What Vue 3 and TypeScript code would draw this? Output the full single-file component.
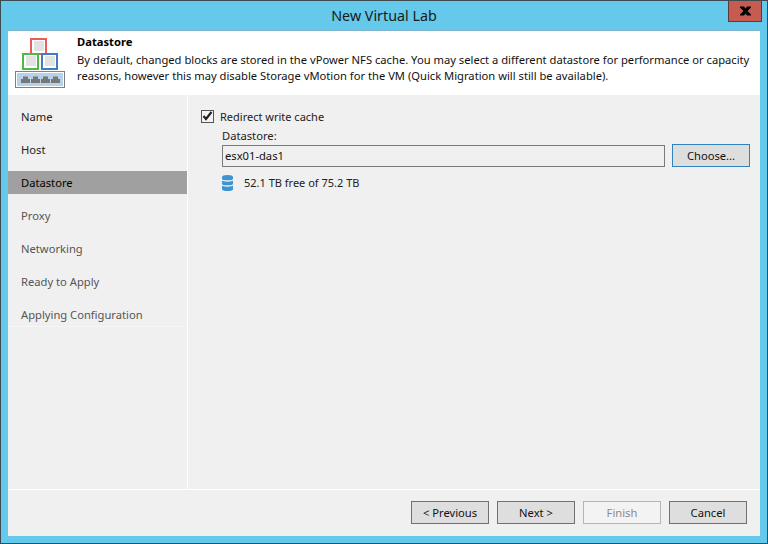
<script setup lang="ts">
const steps = [
  { label: 'Name', state: 'done' },
  { label: 'Host', state: 'done' },
  { label: 'Datastore', state: 'active' },
  { label: 'Proxy', state: 'todo' },
  { label: 'Networking', state: 'todo' },
  { label: 'Ready to Apply', state: 'todo' },
  { label: 'Applying Configuration', state: 'todo' },
]
</script>

<template>
  <div class="window">
    <div class="titlebar">
      <div class="title">New Virtual Lab</div>
      <div class="close">
        <svg width="13" height="10" viewBox="0 0 13 10"><path d="M1 0.500H5L6.500 2.500L8 0.500H12V1.500L8.500 5L12 8.500V9.500H8L6.500 7.500L5 9.500H1V8.500L4.500 5L1 1.500Z" fill="#000" /></svg>
      </div>
    </div>
    <div class="client">
      <header class="header">
        <svg class="logo" width="69" height="64" viewBox="0 0 69 64">
          <rect x="23" y="8" width="15" height="15" fill="#fff" stroke="#e85c5c" stroke-width="2" />
          <rect x="26" y="10" width="10" height="10" fill="#e2e2e2" />
          <rect x="15" y="23" width="15" height="15" fill="#fff" stroke="#4fb848" stroke-width="2" />
          <rect x="18" y="25" width="10" height="10" fill="#e2e2e2" />
          <rect x="34" y="23" width="15" height="15" fill="#fff" stroke="#3f7cc4" stroke-width="2" />
          <rect x="37" y="25" width="10" height="10" fill="#e2e2e2" />
          <rect x="7.500" y="40.500" width="49" height="16" fill="#fff" stroke="#808080" />
          <rect x="9" y="42" width="46" height="13" fill="#b8d0e8" />
          <path d="M13 52V48H15V45.500H20V48H22V52Z M23 52V48H25V45.500H30V48H32V52Z M33 52V48H35V45.500H40V48H42V52Z M43 52V48H45V45.500H50V48H52V52Z" fill="#777" />
        </svg>
        <div class="head-text">
          <div class="head-title">Datastore</div>
          <div class="head-desc">By default, changed blocks are stored in the vPower NFS cache. You may select a different datastore for performance or capacity reasons, however this may disable Storage vMotion for the VM (Quick Migration will still be available).</div>
        </div>
      </header>
      <div class="body">
        <nav class="nav">
          <div v-for="s in steps" :key="s.label" class="step" :class="s.state">{{ s.label }}</div>
        </nav>
        <main class="content">
          <label class="check-row">
            <span class="check">
              <svg width="11" height="10" viewBox="0 0 11 10"><path d="M1.500 5L4 8L9.500 1" fill="none" stroke="#222" stroke-width="2.200" /></svg>
            </span>
            <span>Redirect write cache</span>
          </label>
          <div class="ds-block">
            <div class="ds-label">Datastore:</div>
            <div class="ds-row">
              <div class="input">esx01-das1</div>
              <button class="btn choose">Choose...</button>
            </div>
            <div class="free">
              <svg width="11" height="16" viewBox="0 0 11 16">
                <path d="M0 2Q0 0 5.500 0T11 2V4Q11 5.300 5.500 5.300T0 4Z M0 5.800Q3 6.800 5.500 6.800T11 5.800V9Q11 10.300 5.500 10.300T0 9Z M0 10.800Q3 11.800 5.500 11.800T11 10.800V14Q11 16 5.500 16T0 14Z" fill="#3f93d2" />
              </svg>
              <span>52.1 TB free of 75.2 TB</span>
            </div>
          </div>
        </main>
      </div>
      <footer class="footer">
        <button class="btn">&lt; Previous</button>
        <button class="btn">Next &gt;</button>
        <button class="btn disabled">Finish</button>
        <button class="btn">Cancel</button>
      </footer>
    </div>
  </div>
</template>

<style>
html, body { margin: 0; padding: 0; }
</style>

<style scoped>
.window {
  width: 768px;
  height: 544px;
  box-sizing: border-box;
  background: #64c9eb;
  border: 1px solid #3c4a52;
  padding: 0 7px 7px 7px;
  display: flex;
  flex-direction: column;
  font-family: "Noto Sans", sans-serif;
  font-size: 11.200px;
  color: #111;
  overflow: hidden;
}
.titlebar {
  height: 30px;
  flex: none;
  position: relative;
  display: flex;
  align-items: center;
  justify-content: center;
}
.title { font-size: 14.300px; color: #1a1a1a; margin-top: -1px; }
.close {
  position: absolute;
  top: 0;
  right: -2px;
  width: 34px;
  height: 21px;
  box-sizing: border-box;
  background: #c75b52;
  border: 1px solid #5c3a38;
  border-top: none;
  display: flex;
  align-items: center;
  justify-content: center;
}
.client {
  flex: 1;
  display: flex;
  flex-direction: column;
  background: #f0f0f0;
  min-height: 0;
  box-shadow: 0 -1px 0 #7fb4cc;
}
.header {
  height: 64px;
  flex: none;
  background: #fff;
  display: flex;
}
.logo { flex: none; }
.head-text { padding-top: 3px; }
.head-title { font-weight: 700; line-height: 15px; color: #000; }
.head-desc { line-height: 16px; margin-top: 3px; color: #111; width: 680px; }
.body { flex: 1; display: flex; min-height: 0; border-bottom: 1px solid #fff; }
.nav {
  width: 180px;
  box-sizing: border-box;
  flex: none;
  padding-top: 10px;
  border-right: 1px solid #fff;
}
.step {
  height: 23px;
  line-height: 23px;
  padding-left: 13px;
  margin-bottom: 10px;
}
.step:last-child { box-shadow: 0 1px 0 #f5f5f5; }
.step.done { color: #222; }
.step.active { background: #a0a0a0; color: #000; }
.step.todo { color: #555; }
.content { flex: 1; padding: 13px 10px 0 13px; min-width: 0; }
.check-row { display: flex; align-items: center; gap: 6px; height: 16px; color: #222; font-size: 11px; }
.check {
  width: 13px;
  height: 13px;
  box-sizing: border-box;
  border: 1px solid #555;
  background: #f4f4f4;
  display: flex;
  align-items: center;
  justify-content: center;
}
.ds-block { padding-left: 21px; }
.ds-label { margin-top: 4px; line-height: 16px; color: #222; }
.ds-row { display: flex; gap: 7px; align-items: flex-start; }
.input {
  flex: 1;
  height: 22px;
  margin-top: 1px;
  box-sizing: border-box;
  border: 1px solid #7a7a7a;
  background: #f0f0f0;
  line-height: 20px;
  padding-left: 2px;
  color: #111;
}
.btn {
  width: 78px;
  height: 23px;
  box-sizing: border-box;
  background: #dedede;
  border: 1px solid #707070;
  font: inherit;
  color: #111;
  padding: 0;
}
.choose { border-color: #2f84bd; }
.free { display: flex; align-items: center; gap: 11px; margin: 8px 0 0 0; color: #222; line-height: 16px; font-size: 11px; }
.footer {
  height: 46px;
  flex: none;
  display: flex;
  justify-content: flex-end;
  align-items: flex-start;
  gap: 8px;
  padding: 11px 13px 0 0;
  box-sizing: border-box;
}
.btn.disabled { background: #f3f3f3; border-color: #b5b5b5; color: #8a8a8a; }
</style>
